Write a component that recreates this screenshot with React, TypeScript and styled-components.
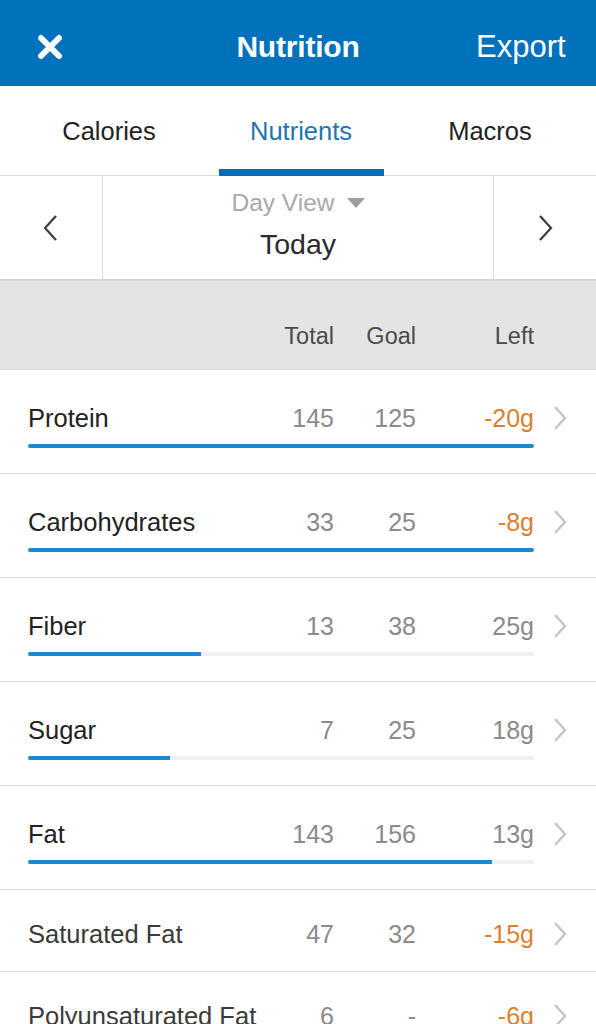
import React from "react";
import styled, { createGlobalStyle } from "styled-components";

const Global = createGlobalStyle`
  html, body { margin: 0; padding: 0; background: #fff; }
  body { font-family: "Liberation Sans", Arial, sans-serif; -webkit-font-smoothing: antialiased; }
  * { box-sizing: border-box; }
`;

const Screen = styled.div`
  width: 596px;
  height: 1024px;
  overflow: hidden;
  background: #fff;
`;

const TopBar = styled.header`
  height: 86px;
  padding-top: 7px;
  background: #0071bb;
  display: grid;
  grid-template-columns: 120px 1fr 120px;
  align-items: center;
  color: #fff;
`;

const CloseButton = styled.button`
  background: none;
  border: 0;
  padding: 0 0 0 37px;
  display: flex;
  align-items: center;
  height: 100%;
`;

const Title = styled.h1`
  margin: 0;
  text-align: center;
  font-size: 30px;
  font-weight: 700;
  letter-spacing: -0.2px;
`;

const ExportButton = styled.button`
  background: none;
  border: 0;
  color: #fff;
  font-family: inherit;
  font-size: 31px;
  text-align: right;
  padding: 0 32px 0 0;
  white-space: nowrap;
`;

const Tabs = styled.nav`
  height: 90px;
  display: grid;
  grid-template-columns: 218px 166px 1fr;
  border-bottom: 1px solid #dcdcdc;
`;

const Tab = styled.div<{ $active?: boolean }>`
  display: flex;
  align-items: center;
  justify-content: center;
  position: relative;
  font-size: 25.5px;
  color: ${(p) => (p.$active ? "#1f74b4" : "#222")};
  padding-top: 2px;
  &::after {
    content: "";
    display: ${(p) => (p.$active ? "block" : "none")};
    position: absolute;
    left: 1px;
    right: 0;
    bottom: -1px;
    height: 7px;
    background: #0b6cb5;
  }
`;

const DayNav = styled.div`
  height: 105px;
  display: grid;
  grid-template-columns: 103px 1fr 103px;
  border-bottom: 2px solid #d6d6d6;
`;

const NavCell = styled.button<{ $side: "left" | "right" }>`
  background: #fff;
  border: 0;
  ${(p) => (p.$side === "left" ? "border-right" : "border-left")}: 1px solid #dedede;
  display: flex;
  align-items: center;
  justify-content: center;
  padding: 0;
`;

const DayCenter = styled.div`
  display: flex;
  flex-direction: column;
  align-items: center;
  justify-content: center;
  gap: 10px;
  padding-bottom: 6px;
`;

const DayView = styled.div`
  display: flex;
  align-items: center;
  gap: 12px;
  font-size: 24.5px;
  color: #a9a9a9;
  line-height: 28px;
`;

const Today = styled.div`
  font-size: 28.5px;
  color: #2b2b2b;
  line-height: 34px;
`;

const Grid = styled.div`
  display: grid;
  grid-template-columns: 1fr 72px 82px 118px 62px;
  padding-left: 28px;
`;

const HeadRow = styled(Grid)`
  height: 89px;
  background: #e4e4e4;
  align-items: center;
  font-size: 23.5px;
  color: #4a4a4a;
  border-bottom: 1px solid #d8d8d8;
  padding-top: 22px;
`;

const HeadCell = styled.div<{ $col: number }>`
  text-align: right;
  grid-column: ${(p) => p.$col};
`;

const Row = styled(Grid)<{ $bar: boolean }>`
  border-bottom: 1px solid #dcdcdc;
  padding-top: ${(p) => (p.$bar ? "33px" : "29px")};
  padding-bottom: ${(p) => (p.$bar ? "25px" : "22px")};
  row-gap: 11px;
  align-items: center;
`;

const Name = styled.div<{ $main: boolean }>`
  font-size: 25.5px;
  line-height: 30px;
  color: ${(p) => (p.$main ? "#222" : "#3a3a3a")};
  white-space: nowrap;
`;

const Num = styled.div<{ $warn?: boolean }>`
  font-size: 25px;
  line-height: 30px;
  text-align: right;
  color: ${(p) => (p.$warn ? "#d9812f" : "#8a8a8a")};
`;

const Chevron = styled.div`
  grid-row: 1;
  grid-column: 5;
  padding-left: 18px;
  display: flex;
  align-items: center;
  height: 30px;
`;

const Track = styled.div`
  grid-column: 1 / 5;
  height: 4px;
  background: #eef0f3;
  border-radius: 2px;
  overflow: hidden;
`;

const Fill = styled.div`
  height: 100%;
  background: #1e88cf;
`;

const XIcon = () => (
  <svg width="26" height="26" viewBox="0 0 26 26">
    <path d="M4 4 L22 22 M22 4 L4 22" stroke="#fff" strokeWidth="6" strokeLinecap="round" />
  </svg>
);

const NavChevron = ({ dir }: { dir: "left" | "right" }) => (
  <svg width="18" height="28" viewBox="0 0 18 28">
    <path
      d={dir === "left" ? "M14 2 L3 14 L14 26" : "M4 2 L15 14 L4 26"}
      fill="none"
      stroke="#3c3c3c"
      strokeWidth="2.2"
    />
  </svg>
);

const RowChevron = () => (
  <svg width="16" height="26" viewBox="0 0 16 26">
    <path d="M3 2 L13 13 L3 24" fill="none" stroke="#c4c4c4" strokeWidth="2.4" />
  </svg>
);

const Caret = () => (
  <svg width="18" height="10" viewBox="0 0 18 10">
    <path d="M0 0 H18 L9 10 Z" fill="#9e9e9e" />
  </svg>
);

type Nutrient = {
  name: string;
  total: number;
  goal: number | null;
  bar: boolean;
};

const data: Nutrient[] = [
  { name: "Protein", total: 145, goal: 125, bar: true },
  { name: "Carbohydrates", total: 33, goal: 25, bar: true },
  { name: "Fiber", total: 13, goal: 38, bar: true },
  { name: "Sugar", total: 7, goal: 25, bar: true },
  { name: "Fat", total: 143, goal: 156, bar: true },
  { name: "Saturated Fat", total: 47, goal: 32, bar: false },
  { name: "Polyunsaturated Fat", total: 6, goal: null, bar: false },
];

export default function App() {
  return (
    <Screen>
      <Global />
      <TopBar>
        <CloseButton aria-label="Close">
          <XIcon />
        </CloseButton>
        <Title>Nutrition</Title>
        <ExportButton>Export</ExportButton>
      </TopBar>
      <Tabs>
        <Tab>Calories</Tab>
        <Tab $active>Nutrients</Tab>
        <Tab>Macros</Tab>
      </Tabs>
      <DayNav>
        <NavCell $side="left">
          <NavChevron dir="left" />
        </NavCell>
        <DayCenter>
          <DayView>
            Day View <Caret />
          </DayView>
          <Today>Today</Today>
        </DayCenter>
        <NavCell $side="right">
          <NavChevron dir="right" />
        </NavCell>
      </DayNav>
      <HeadRow>
        <HeadCell $col={2}>Total</HeadCell>
        <HeadCell $col={3}>Goal</HeadCell>
        <HeadCell $col={4}>Left</HeadCell>
      </HeadRow>
      {data.map((n) => {
        const left = (n.goal ?? 0) - n.total;
        const pct = n.goal ? Math.min(1, n.total / n.goal) * 100 : 0;
        return (
          <Row key={n.name} $bar={n.bar}>
            <Name $main={n.bar}>{n.name}</Name>
            <Num>{n.total}</Num>
            <Num>{n.goal ?? "-"}</Num>
            <Num $warn={left < 0}>{left}g</Num>
            <Chevron>
              <RowChevron />
            </Chevron>
            {n.bar && (
              <Track>
                <Fill style={{ width: `${pct}%` }} />
              </Track>
            )}
          </Row>
        );
      })}
    </Screen>
  );
}
